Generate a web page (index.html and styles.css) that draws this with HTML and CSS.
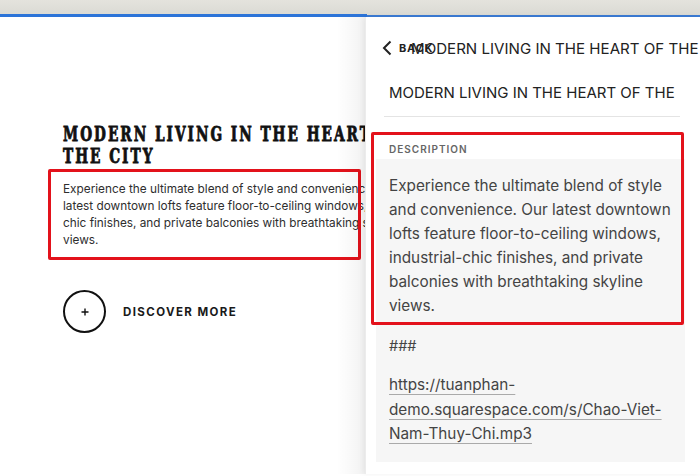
FILE: index.html
```html
<!DOCTYPE html>
<html>
<head>
<meta charset="utf-8">
<link rel="stylesheet" href="styles.css">
</head>
<body>
<div class="topbar"><div class="progress"></div></div>
<div class="stage">
  <section class="page">
    <h1 class="hero-title">MODERN LIVING IN THE HEART OF<br>THE CITY</h1>
    <div class="hero-desc">
      <p>Experience the ultimate blend of style and convenience. Our<br>latest downtown lofts feature floor-to-ceiling windows, industrial-<br>chic finishes, and private balconies with breathtaking skyline<br>views.</p>
    </div>
    <a class="discover" href="#">
      <span class="circle"><svg width="10" height="10" viewBox="0 0 10 10"><path d="M5 1.5v7M1.5 5h7" stroke="#111" stroke-width="1.4"/></svg></span>
      <span class="discover-label">DISCOVER MORE</span>
    </a>
  </section>
  <aside class="panel">
    <div class="panel-head">
      <svg class="chev" width="12" height="16" viewBox="0 0 12 16"><path d="M9.5 1.5L3 8l6.5 6.5" fill="none" stroke="#222" stroke-width="2"/></svg>
      <span class="back">BACK</span>
      <span class="head-title">MODERN LIVING IN THE HEART OF THE</span>
    </div>
    <div class="item-title">MODERN LIVING IN THE HEART OF THE</div>
    <div class="field">
      <div class="field-label">DESCRIPTION</div>
      <div class="field-body">
        <p class="desc-text">Experience the ultimate blend of style and convenience. Our latest downtown lofts feature floor-to-ceiling windows, industrial-chic finishes, and private balconies with breathtaking skyline views.</p>
        <p class="hash">###</p>
        <p class="link"><a href="#">https://tuanphan-<br>demo.squarespace.com/s/Chao-Viet-<br>Nam-Thuy-Chi.mp3</a></p>
      </div>
    </div>
  </aside>
</div>
</body>
</html>
```

FILE: styles.css
```css
* { box-sizing: border-box; }
html, body { margin: 0; padding: 0; background: #fff; }
body { width: 700px; height: 476px; overflow: hidden; font-family: Inter, "Liberation Sans", sans-serif; }

.topbar {
  height: 17px;
  background: linear-gradient(#e4e3dd, #dadad4);
  position: relative;
  border-bottom: 2px solid #3b7bd4;
}
.progress {
  position: absolute; left: 0; bottom: -2px; width: 367px; height: 3px;
  background: #2c74d8;
}

.stage {
  display: grid;
  grid-template-columns: 365px 335px;
  height: 457px;
}

.page {
  overflow: hidden;
  padding: 107px 0 0 63px;
  background: #fff;
  position: relative;
}
.page::after {
  content: ""; position: absolute; top: 0; right: 0; width: 28px; height: 100%;
  background: linear-gradient(to right, rgba(0,0,0,0), rgba(0,0,0,0.05));
}
.hero-title {
  margin: 0;
  white-space: nowrap;
  font-family: "DejaVu Serif", serif;
  font-stretch: condensed;
  font-weight: 700;
  font-size: 15.2px;
  line-height: 16px;
  letter-spacing: 2px;
  color: #111;
  -webkit-text-stroke: 0.6px #111;
  transform: scaleY(1.34);
  transform-origin: top left;
}
.hero-desc {
  position: relative;
  margin: 13px 0 0 -15px;
  width: 313px;
  height: 91px;
  padding: 12px 0 0 15px;
}
.hero-desc::after {
  content: ""; position: absolute; inset: 0;
  border: 3px solid #e3121b;
  border-radius: 2px;
}
.hero-desc p {
  margin: 0;
  white-space: nowrap;
  font-size: 11.8px;
  line-height: 17px;
  color: #2e2e2e;
}

.discover {
  display: flex; align-items: center; gap: 17px;
  margin-top: 30px;
  text-decoration: none;
}
.circle {
  width: 43px; height: 43px; border-radius: 50%;
  border: 2px solid #111;
  display: flex; align-items: center; justify-content: center;
}
.discover-label {
  font-size: 11.5px; font-weight: 700; letter-spacing: 1.4px; color: #1a1a1a;
}

.panel {
  background: #fff;
  box-shadow: -2px 0 6px rgba(0,0,0,0.06);
  padding: 0 15px 0 10px;
  position: relative;
  z-index: 2;
  border-left: 1px solid #ececec;
}
.panel-head {
  position: relative;
  display: flex; align-items: center;
  height: 59px;
  padding-left: 5px;
  padding-top: 3px;
}
.chev { display: block; }
.back {
  margin-left: 6px;
  font-size: 11px; font-weight: 700; letter-spacing: 0.8px; color: #222;
}
.head-title {
  position: absolute; left: 35px; top: 21px; line-height: 22px;
  white-space: nowrap;
  font-size: 15.1px; color: #222;
}
.item-title {
  margin: 0 5px 0 8px;
  padding: 3px 0 0 5px;
  height: 41px;
  line-height: 28px;
  font-size: 15px; color: #222;
  white-space: nowrap;
  border-bottom: 1px solid #e4e4e4;
}
.field { position: relative; }
.field::after {
  content: ""; position: absolute; left: -5px; top: 15px; width: 307px; height: 187px;
  border: 3px solid #e3121b; border-radius: 2px; pointer-events: none;
}
.field-label {
  padding: 26px 0 0 13px;
  height: 42px;
  font-size: 10px; font-weight: 600; letter-spacing: 1px; color: #666;
}
.field-body {
  background: #f6f6f6;
  padding: 15px 10px 14px 13px;
  height: 303px;
}
.field-body p { margin: 0; color: #444; font-size: 15.3px; line-height: 24px; }
.hash { margin-top: 16px !important; font-size: 14.5px !important; }
.link { margin-top: 15px !important; line-height: 24.5px !important; }
.link a { color: #444; text-decoration: underline; text-decoration-color: #aaa; text-underline-offset: 4px; }
```
